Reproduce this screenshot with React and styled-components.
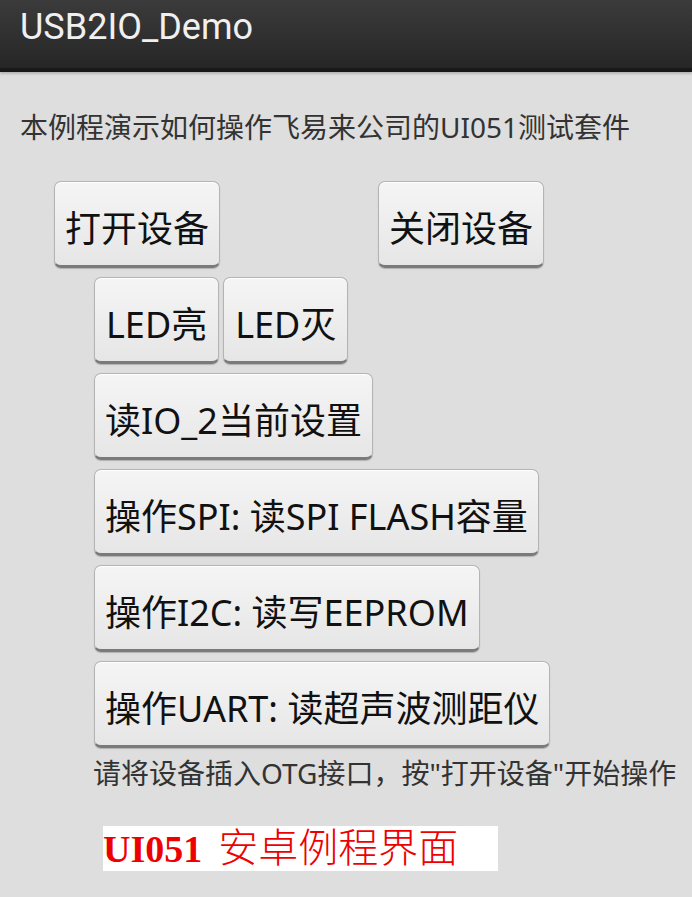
import React from 'react'
import styled, { createGlobalStyle } from 'styled-components'

const GlobalStyle = createGlobalStyle`
  html, body {
    margin: 0;
    padding: 0;
    background: #dedede;
  }
  body {
    font-family: "Noto Sans", "Noto Sans CJK SC", sans-serif;
  }
`

const Screen = styled.div`
  width: 692px;
  min-height: 897px;
  background: #dedede;
  overflow: hidden;
`

const TitleBar = styled.header`
  height: 72px;
  box-sizing: border-box;
  display: flex;
  align-items: center;
  padding: 0 0 14px 20px;
  background: linear-gradient(#3b3b3b, #262626);
  border-bottom: 4px solid #191919;
  box-shadow: 0 2px 2px rgba(0, 0, 0, 0.18);
`

const Title = styled.h1`
  margin: 0;
  font-family: Roboto, "Noto Sans", sans-serif;
  font-weight: 400;
  font-size: 36px;
  line-height: 40px;
  color: #f0f0f0;
`

const Content = styled.main`
  display: flex;
  flex-direction: column;
  padding: 35px 0 0 20px;
`

const Intro = styled.p`
  margin: 0 0 34px;
  font-size: 28px;
  line-height: 40px;
  color: #333;
`

const TopRow = styled.div`
  display: flex;
  gap: 158px;
  padding-left: 34px;
  margin-bottom: 9px;
`

const Stack = styled.div`
  display: flex;
  flex-direction: column;
  align-items: flex-start;
  gap: 9px;
  padding-left: 74px;
`

const Pair = styled.div`
  display: flex;
  gap: 4px;
`

const Button = styled.button`
  height: 87px;
  padding: 6px ${p => p.$pad || 10}px 0;
  display: flex;
  align-items: center;
  border: 1px solid #b4b4b4;
  border-bottom: 3px solid #7a7a7a;
  border-radius: 7px;
  background: linear-gradient(#f5f5f5, #e6e6e6);
  box-shadow: inset 0 1px 0 #ffffff, 0 1px 1px rgba(0, 0, 0, 0.2);
  font-family: "Noto Sans", "Noto Sans CJK SC", sans-serif;
  font-size: 36px;
  color: #111;
  white-space: nowrap;
  cursor: pointer;
`

const Hint = styled.p`
  margin: 5px 0 0 73px;
  font-size: 28px;
  line-height: 40px;
  color: #333;
`

const Stamp = styled.div`
  align-self: flex-start;
  margin: 33px 0 0 83px;
  width: 395px;
  height: 45px;
  display: flex;
  align-items: center;
  background: #fff;
  color: #ee0000;
  font-family: "Liberation Serif", "Noto Sans CJK SC", serif;
  font-size: 38px;
  line-height: 1;
`

const StampCode = styled.b`
  font-weight: 700;
  margin-right: 16px;
`

const StampText = styled.span`
  font-weight: 300;
  font-size: 40px;
`

export default function App() {
  return (
    <Screen>
      <GlobalStyle />
      <TitleBar>
        <Title>USB2IO_Demo</Title>
      </TitleBar>
      <Content>
        <Intro>本例程演示如何操作飞易来公司的UI051测试套件</Intro>
        <TopRow>
          <Button>打开设备</Button>
          <Button>关闭设备</Button>
        </TopRow>
        <Stack>
          <Pair>
            <Button $pad={11}>LED亮</Button>
            <Button $pad={11}>LED灭</Button>
          </Pair>
          <Button>读IO_2当前设置</Button>
          <Button>操作SPI: 读SPI FLASH容量</Button>
          <Button>操作I2C: 读写EEPROM</Button>
          <Button>操作UART: 读超声波测距仪</Button>
        </Stack>
        <Hint>请将设备插入OTG接口，按"打开设备"开始操作</Hint>
        <Stamp>
          <StampCode>UI051</StampCode>
          <StampText>安卓例程界面</StampText>
        </Stamp>
      </Content>
    </Screen>
  )
}
